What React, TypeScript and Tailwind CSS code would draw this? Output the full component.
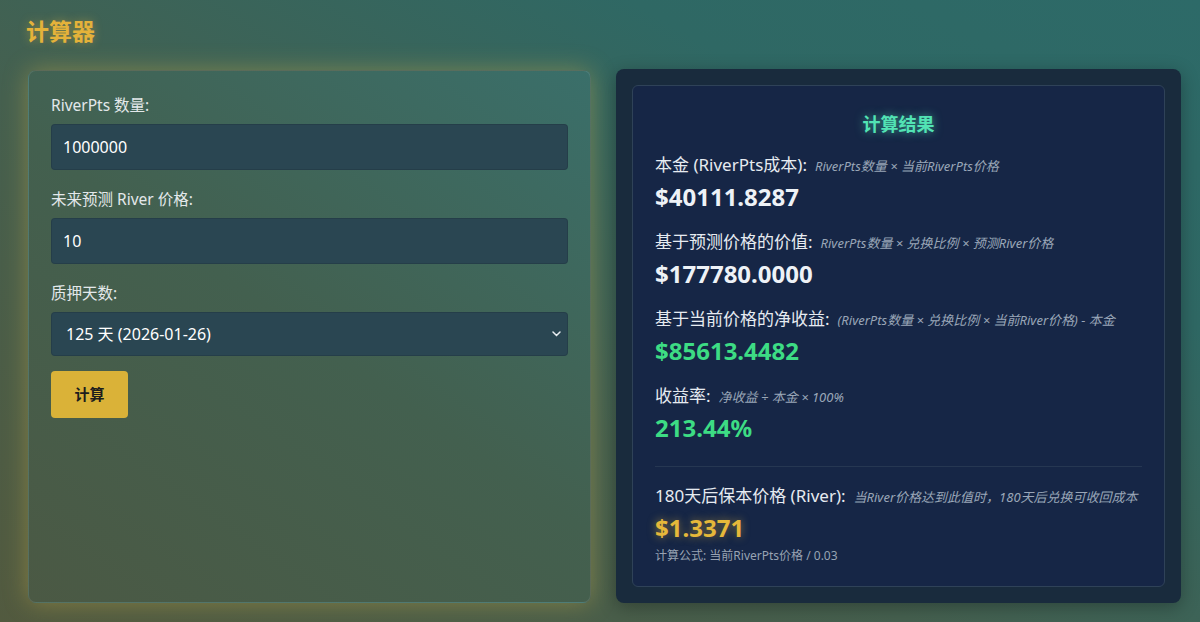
import React, { useState } from "react";

const font = { fontFamily: '"Noto Sans", "Noto Sans CJK SC", sans-serif' };

type Row = {
  label: string;
  formula: string;
  value: string;
  tone: "white" | "green" | "gold";
};

const rows: Row[] = [
  {
    label: "本金 (RiverPts成本):",
    formula: "RiverPts数量 × 当前RiverPts价格",
    value: "$40111.8287",
    tone: "white",
  },
  {
    label: "基于预测价格的价值:",
    formula: "RiverPts数量 × 兑换比例 × 预测River价格",
    value: "$177780.0000",
    tone: "white",
  },
  {
    label: "基于当前价格的净收益:",
    formula: "(RiverPts数量 × 兑换比例 × 当前River价格) - 本金",
    value: "$85613.4482",
    tone: "green",
  },
  {
    label: "收益率:",
    formula: "净收益 ÷ 本金 × 100%",
    value: "213.44%",
    tone: "green",
  },
];

const toneClass = {
  white: "text-[#eef2f7]",
  green: "text-[#3ddc84]",
  gold: "text-[#e6b83a] [text-shadow:0_0_8px_rgba(230,184,58,0.55)]",
};

function ResultRow({ row }: { row: Row }) {
  return (
    <div>
      <div className="flex items-baseline h-6 whitespace-nowrap">
        <span className="text-[17px] leading-6 text-[#e6ebf1]">{row.label}</span>
        <span className="ml-2 text-[13px] italic text-[#9aa6b8]">{row.formula}</span>
      </div>
      <div className={`mt-1 h-8 text-[24px] leading-8 font-bold ${toneClass[row.tone]}`}>
        {row.value}
      </div>
    </div>
  );
}

export default function App() {
  const [pts, setPts] = useState("1000000");
  const [price, setPrice] = useState("10");
  const [days, setDays] = useState("125");

  const inputCls =
    "mt-[8px] block w-[517px] h-[46px] rounded-[4px] border border-black/10 bg-[#2a4652] px-[11px] text-[16px] text-white outline-none";
  const labelCls = "block text-[15.5px] leading-[22px] text-[#e3e8ea]";

  return (
    <div
      style={font}
      className="min-h-screen w-full bg-[linear-gradient(30deg,#525a3f_0%,#45604f_40%,#2f6864_75%,#2d6a68_100%)] pl-[28px] pr-[19px] pt-[15px]"
    >
      <h1 className="text-[23px] leading-[32px] font-bold text-[#e4b23a] -ml-[2px] [text-shadow:0_0_10px_rgba(228,178,58,0.45)]">
        计算器
      </h1>

      <div className="mt-[23px] grid grid-cols-[563px_565px] gap-[25px]">
        {/* 输入 */}
        <div className="h-[533px] rounded-lg border border-white/10 bg-[linear-gradient(35deg,#4b5944_0%,#43604f_50%,#3a6f6a_100%)] px-[22px] pt-[23px] shadow-[0_0_24px_rgba(214,180,70,0.4)]">
          <label className={labelCls}>RiverPts 数量:</label>
          <input value={pts} onChange={(e) => setPts(e.target.value)} className={inputCls} />

          <label className={`mt-[18px] ${labelCls}`}>未来预测 River 价格:</label>
          <input value={price} onChange={(e) => setPrice(e.target.value)} className={inputCls} />

          <label className={`mt-[18px] ${labelCls}`}>质押天数:</label>
          <div className="relative mt-[8px] w-[517px]">
            <select
              value={days}
              onChange={(e) => setDays(e.target.value)}
              className="block w-full h-[44px] appearance-none rounded-[4px] border border-black/10 bg-[#2a4652] pl-[14px] text-[16px] text-white outline-none"
            >
              <option value="125">125 天 (2026-01-26)</option>
              <option value="180">180 天 (2026-03-23)</option>
            </select>
            <svg
              className="pointer-events-none absolute right-[7px] top-[19px]"
              width="9"
              height="6"
              viewBox="0 0 9 6"
              fill="none"
            >
              <path d="M1 1l3.5 3.5L8 1" stroke="#e8edf0" strokeWidth="1.5" strokeLinecap="round" />
            </svg>
          </div>

          <button className="mt-[15px] h-[47px] w-[77px] rounded-[4px] bg-[#dab238] text-[15px] font-bold text-[#1d1d1d]">
            计算
          </button>
        </div>

        {/* 结果 */}
        <div className="h-[534px] -mt-px rounded-lg bg-[#192b3d] p-[16px] shadow-[0_4px_18px_rgba(0,0,0,0.3)]">
          <div className="h-full rounded-md border border-[#2f4258] bg-[#162646] px-[22px] pt-[24px]">
            <h2 className="text-center text-[18px] leading-[28px] font-bold text-[#52e3b4] [text-shadow:0_0_10px_rgba(82,227,180,0.6)]">
              计算结果
            </h2>
            <div className="mt-[15px] flex flex-col gap-[17px]">
              {rows.map((r) => (
                <ResultRow key={r.label} row={r} />
              ))}
            </div>
            <div className="mt-[22px] border-t border-[#263752]" />
            <div className="pt-[17px]">
              <ResultRow
                row={{
                  label: "180天后保本价格 (River):",
                  formula: "当River价格达到此值时，180天后兑换可收回成本",
                  value: "$1.3371",
                  tone: "gold",
                }}
              />
              <div className="mt-[4px] text-[12px] leading-4 text-[#98a3b3]">
                计算公式: 当前RiverPts价格 / 0.03
              </div>
            </div>
          </div>
        </div>
      </div>
    </div>
  );
}
